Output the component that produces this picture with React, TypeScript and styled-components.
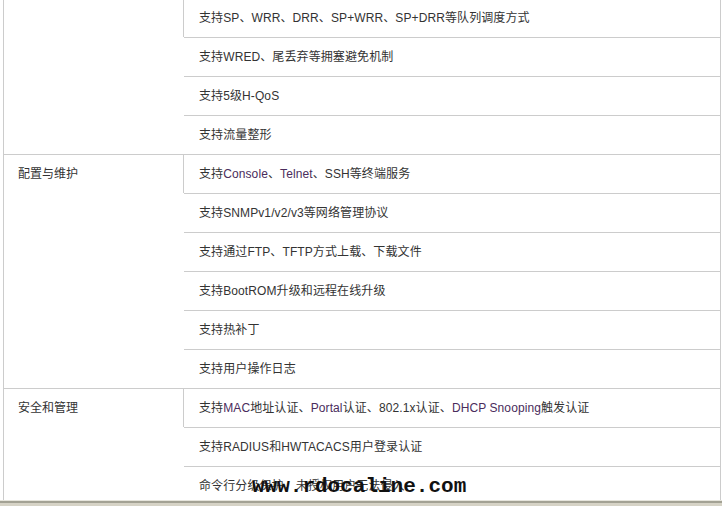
import React from 'react';
import styled, {createGlobalStyle} from "styled-components";

const GlobalStyle = createGlobalStyle`
    html, body {
        margin: 0;
        padding: 0;
        background: #ffffff;
        overflow: hidden;
    }
`

type Part = string | {link: string};

type Group = {
    label: string;
    items: Part[][];
};

const groups: Group[] = [
    {
        label: '',
        items: [
            ['支持SP、WRR、DRR、SP+WRR、SP+DRR等队列调度方式'],
            ['支持WRED、尾丢弃等拥塞避免机制'],
            ['支持5级H-QoS'],
            ['支持流量整形'],
        ],
    },
    {
        label: '配置与维护',
        items: [
            ['支持', {link: 'Console'}, '、', {link: 'Telnet'}, '、SSH等终端服务'],
            ['支持SNMPv1/v2/v3等网络管理协议'],
            ['支持通过FTP、TFTP方式上载、下载文件'],
            ['支持BootROM升级和远程在线升级'],
            ['支持热补丁'],
            ['支持用户操作日志'],
        ],
    },
    {
        label: '安全和管理',
        items: [
            ['支持', {link: 'MAC'}, '地址认证、', {link: 'Portal'}, '认证、802.1x认证、', {link: 'DHCP Snooping'}, '触发认证'],
            ['支持RADIUS和HWTACACS用户登录认证'],
            ['命令行分级保护，未授权用户无法侵入'],
        ],
    },
];

export default function App() {
    return (
        <Page>
            <GlobalStyle/>
            <Table>
                {groups.map((group, gi) => (
                    <GroupRow key={gi}>
                        <Label>{group.label}</Label>
                        <Items>
                            {group.items.map((parts, ii) => (
                                <Item key={ii}>
                                    {parts.map((p, pi) =>
                                        typeof p === 'string'
                                            ? <React.Fragment key={pi}>{p}</React.Fragment>
                                            : <Link key={pi}>{p.link}</Link>
                                    )}
                                </Item>
                            ))}
                        </Items>
                    </GroupRow>
                ))}
            </Table>
            <Watermark>www.rdocaline.com</Watermark>
            <StatusEdge/>
        </Page>
    );
}

const Page = styled.div`
    position: relative;
    height: 506px;
    overflow: hidden;
    padding-left: 3px;
    font-family: "Liberation Sans", "Noto Sans CJK SC", sans-serif;
    font-size: 12px;
    color: #333333;
`

const Table = styled.div`
    width: 718px;
    box-sizing: border-box;
    margin-top: -2px;
    border: 1px solid #cccccc;
`

const GroupRow = styled.div`
    display: grid;
    grid-template-columns: 180px 1fr;

    & + & {
        border-top: 1px solid #cccccc;
    }
`

const Label = styled.div`
    border-right: 1px solid #cccccc;
    padding-left: 14px;
    height: 38px;
    line-height: 38px;
`

const Items = styled.div`
    display: flex;
    flex-direction: column;
`

const Item = styled.div`
    height: 38px;
    line-height: 38px;
    padding-left: 15px;
    white-space: nowrap;
    letter-spacing: 0.1px;

    & + & {
        border-top: 1px solid #cccccc;
    }
`

const Link = styled.span`
    color: #4a2c5c;
`

const Watermark = styled.div`
    position: absolute;
    left: 252px;
    top: 476px;
    font-family: "Liberation Mono", monospace;
    font-weight: bold;
    font-size: 21px;
    line-height: 1;
    color: #111111;
`

const StatusEdge = styled.div`
    position: absolute;
    left: 0;
    right: 0;
    bottom: 0;
    height: 5px;
    border-top: 1px solid #e6e5dc;
    background: linear-gradient(#a3a294 0, #a3a294 2px, #d6d3c6 2px);
`
